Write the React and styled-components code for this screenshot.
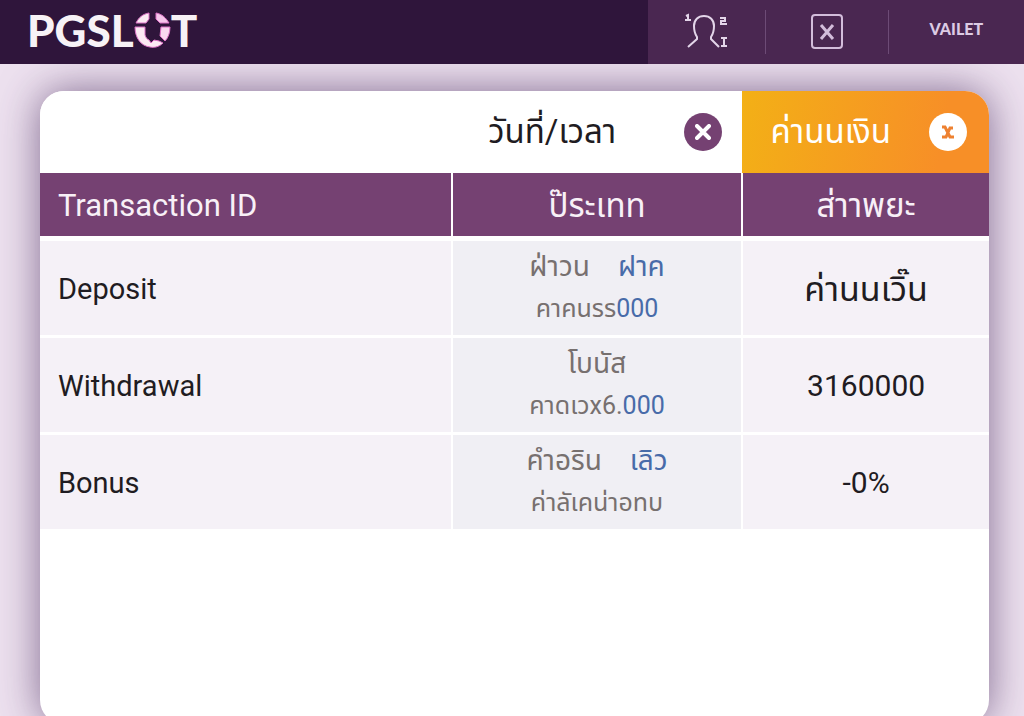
import React from 'react';
import styled, { createGlobalStyle } from 'styled-components';

const GlobalStyle = createGlobalStyle`
  *, *::before, *::after { box-sizing: border-box; }
  html, body, #root { min-height: 100vh; }
  body {
    margin: 0;
    background: #ede1ef;
    font-family: Roboto, "Noto Sans Thai", "Noto Sans", sans-serif;
    color: #1f1c22;
  }
`;

const Page = styled.div`
  min-height: 100vh;
  display: flex;
  flex-direction: column;
  overflow: hidden;
`;

const Header = styled.header`
  position: relative;
  display: flex;
  height: 64px;
  background: #2f153b;
  justify-content: space-between;
`;

const Logo = styled.a`
  display: flex;
  align-items: center;
  padding-left: 27px;
  padding-bottom: 4px;
  color: #f7f2f6;
  font: 900 44px/60px Lato, sans-serif;
  text-decoration: none;
`;

const Nav = styled.nav`
  display: flex;
  align-items: center;
  width: 376px;
  height: 64px;
  background: #4a2751;
`;

const NavButton = styled.button`
  flex: ${(p) => p.$grow} 1 0;
  display: flex;
  align-items: center;
  justify-content: center;
  height: 44px;
  padding: 0;
  border: 0;
  border-left: ${(p) => (p.$divided ? '1px solid #6d4b76' : '0')};
  background: none;
  color: #dccbe4;
  font: 900 16px/20px Lato, sans-serif;
`;

const NavLabel = styled.span`
  padding-bottom: 6px;
`;

const Main = styled.main`
  flex: 1;
  display: flex;
  padding: 27px 35px 0 40px;
`;

const Card = styled.section`
  flex: 1;
  min-width: 0;
  margin-bottom: -8px;
  border-radius: 24px;
  overflow: hidden;
  background: #fff;
  box-shadow: 0 0 42px rgba(62, 32, 84, 0.62);
`;

const Filters = styled.div`
  display: flex;
  height: 82px;
`;

const Filter = styled.div`
  flex: ${(p) => (p.$accent ? '0 0 26%' : '1')};
  display: flex;
  align-items: center;
  justify-content: flex-end;
  gap: ${(p) => (p.$accent ? '38px' : '68px')};
  padding-right: ${(p) => (p.$accent ? '22px' : '20px')};
  background: ${(p) => (p.$accent ? 'linear-gradient(100deg, #f3b016, #f78f27 80%)' : '#fff')};
  color: ${(p) => (p.$accent ? '#fff' : '#1f1c22')};
  font-size: 33px;
  line-height: 40px;
  white-space: nowrap;
`;

const ClearButton = styled.button`
  display: flex;
  align-items: center;
  justify-content: center;
  width: 38px;
  height: 38px;
  padding: 0;
  border: 0;
  border-radius: 50%;
  background: ${(p) => (p.$light ? '#fff' : '#754172')};
  color: ${(p) => (p.$light ? '#ee8130' : '#fff')};
`;

const Table = styled.table`
  width: 100%;
  table-layout: fixed;
  border-collapse: separate;
  border-spacing: 0;
`;

const Col = styled.col`
  width: ${(p) => p.$width};
`;

const HeadCell = styled.th`
  height: 68px;
  padding: 2px 18px 0;
  border-bottom: 5px solid #fff;
  border-right: 2px solid #fff;
  background: #754172;
  background-clip: padding-box;
  color: #f8f0f7;
  font-size: ${(p) => p.$size || 31}px;
  line-height: 40px;
  font-weight: 400;
  text-align: ${(p) => p.$align || 'center'};
  &:last-child { border-right: 0; }
`;

const Cell = styled.td`
  height: 97px;
  padding: ${(p) => (p.$muted ? '0' : '2px 18px 0')};
  border-bottom: 3px solid #fff;
  border-right: 2px solid #fff;
  background: ${(p) => (p.$muted ? '#f0eff4' : '#f5f1f7')};
  text-align: ${(p) => p.$align || 'center'};
  font-size: ${(p) => p.$size || 30}px;
  line-height: 40px;
  &:last-child { border-right: 0; }
`;

const Detail = styled.div`
  color: #77706f;
  font-size: ${(p) => (p.$large ? 28 : 25)}px;
  line-height: 42px;
  white-space: pre;
`;

const Blue = styled.span`
  margin-left: ${(p) => (p.$spaced ? '28px' : '0')};
  color: #486ba9;
`;

function LogoO() {
  return (
    <svg width="37" height="36" viewBox="0 0 37 36" aria-hidden="true">
      <g fill="#fbeaf3" stroke="#dd72c6" strokeWidth="1">
        <path d="M2 11C5 5 9 2 15 1V7L12 11Z" />
        <path d="M22 1C28 2 32 6 35 11H26L22 7Z" fill="#f6c6ec" />
        <path d="M1 15H11V23C12 26 13 27 15 28L17 31L20 28L25 29L29 31C25 35 20 36 16 35C7 34 1 26 1 15Z" />
        <path d="M27 15H36C36 21 34 26 31 29L26 24Z" fill="#f9d8f0" />
      </g>
    </svg>
  );
}

function UserIcon() {
  return (
    <svg width="46" height="40" viewBox="0 0 46 40" fill="none" stroke="#e3d5e9" strokeWidth="2" aria-hidden="true">
      <path d="M4 35L13 27V25C11 22 10 18 10 14C10 8 14 4 20 4S30 8 30 14C30 18 29 22 27 25V27L35 35" />
      <path d="M2 4L4 3V7M1 8H7" />
      <path d="M36 6H41V9H37V12H43" />
      <path d="M37 26H43M40 26V34M37 34H43" />
    </svg>
  );
}

function BoxIcon() {
  return (
    <svg width="34" height="36" viewBox="0 0 34 36" fill="none" stroke="#d3bddb" strokeWidth="2" aria-hidden="true">
      <rect x="2" y="1" width="30" height="33" rx="3" />
      <path d="M11 11L23 25M23 11L11 25" strokeWidth="3" />
    </svg>
  );
}

function CrossIcon() {
  return (
    <svg width="16" height="16" viewBox="0 0 16 16" fill="none" stroke="currentColor" strokeWidth="4" strokeLinecap="round" aria-hidden="true">
      <path d="M2 2L14 14M14 2L2 14" />
    </svg>
  );
}

function SmallCrossIcon() {
  return (
    <svg width="14" height="14" viewBox="0 0 14 14" fill="none" stroke="currentColor" strokeWidth="3" aria-hidden="true">
      <path d="M1 2H4L9 12H13M12 3H9L5 12H1" />
    </svg>
  );
}

const rows = [
  { id: 'Deposit', top: 'ฝ่าวน', topBlue: 'ฝาค', bottom: 'คาคนรร', bottomBlue: '000', value: 'ค่านนเวิ๊น', valueSize: 34 },
  { id: 'Withdrawal', top: 'โบนัส', bottom: 'คาดเวx6.', bottomBlue: '000', value: '3160000' },
  { id: 'Bonus', top: 'คำอริน', topBlue: 'เลิว', bottom: 'ค่าลัเคน่าอทบ', value: '-0%' },
];

export default function App() {
  return (
    <Page>
      <GlobalStyle />
      <Header>
        <Logo href="#" aria-label="PGSLOT">PGSL<LogoO />T</Logo>
        <Nav>
          <NavButton $grow={118} aria-label="Account"><UserIcon /></NavButton>
          <NavButton $grow={122} $divided aria-label="Close"><BoxIcon /></NavButton>
          <NavButton $grow={136} $divided><NavLabel>VAILET</NavLabel></NavButton>
        </Nav>
      </Header>
      <Main>
        <Card>
          <Filters>
            <Filter>
              <span>วันที่/เวลา</span>
              <ClearButton aria-label="Clear date"><CrossIcon /></ClearButton>
            </Filter>
            <Filter $accent>
              <span>ค่านนเงิน</span>
              <ClearButton $light aria-label="Clear amount"><SmallCrossIcon /></ClearButton>
            </Filter>
          </Filters>
          <Table>
            <colgroup>
              <Col $width="43.5%" />
              <Col $width="30.6%" />
              <Col $width="25.9%" />
            </colgroup>
            <thead>
              <tr>
                <HeadCell $align="left">Transaction ID</HeadCell>
                <HeadCell $size={33}>ป๊ระเทท</HeadCell>
                <HeadCell $size={33}>ส่าาพยะ</HeadCell>
              </tr>
            </thead>
            <tbody>
              {rows.map((r) => (
                <tr key={r.id}>
                  <Cell $align="left" $size={29}>{r.id}</Cell>
                  <Cell $muted>
                    <Detail $large>{r.top}{r.topBlue && <Blue $spaced>{r.topBlue}</Blue>}</Detail>
                    <Detail>{r.bottom}{r.bottomBlue && <Blue>{r.bottomBlue}</Blue>}</Detail>
                  </Cell>
                  <Cell $size={r.valueSize}>{r.value}</Cell>
                </tr>
              ))}
            </tbody>
          </Table>
        </Card>
      </Main>
    </Page>
  );
}
